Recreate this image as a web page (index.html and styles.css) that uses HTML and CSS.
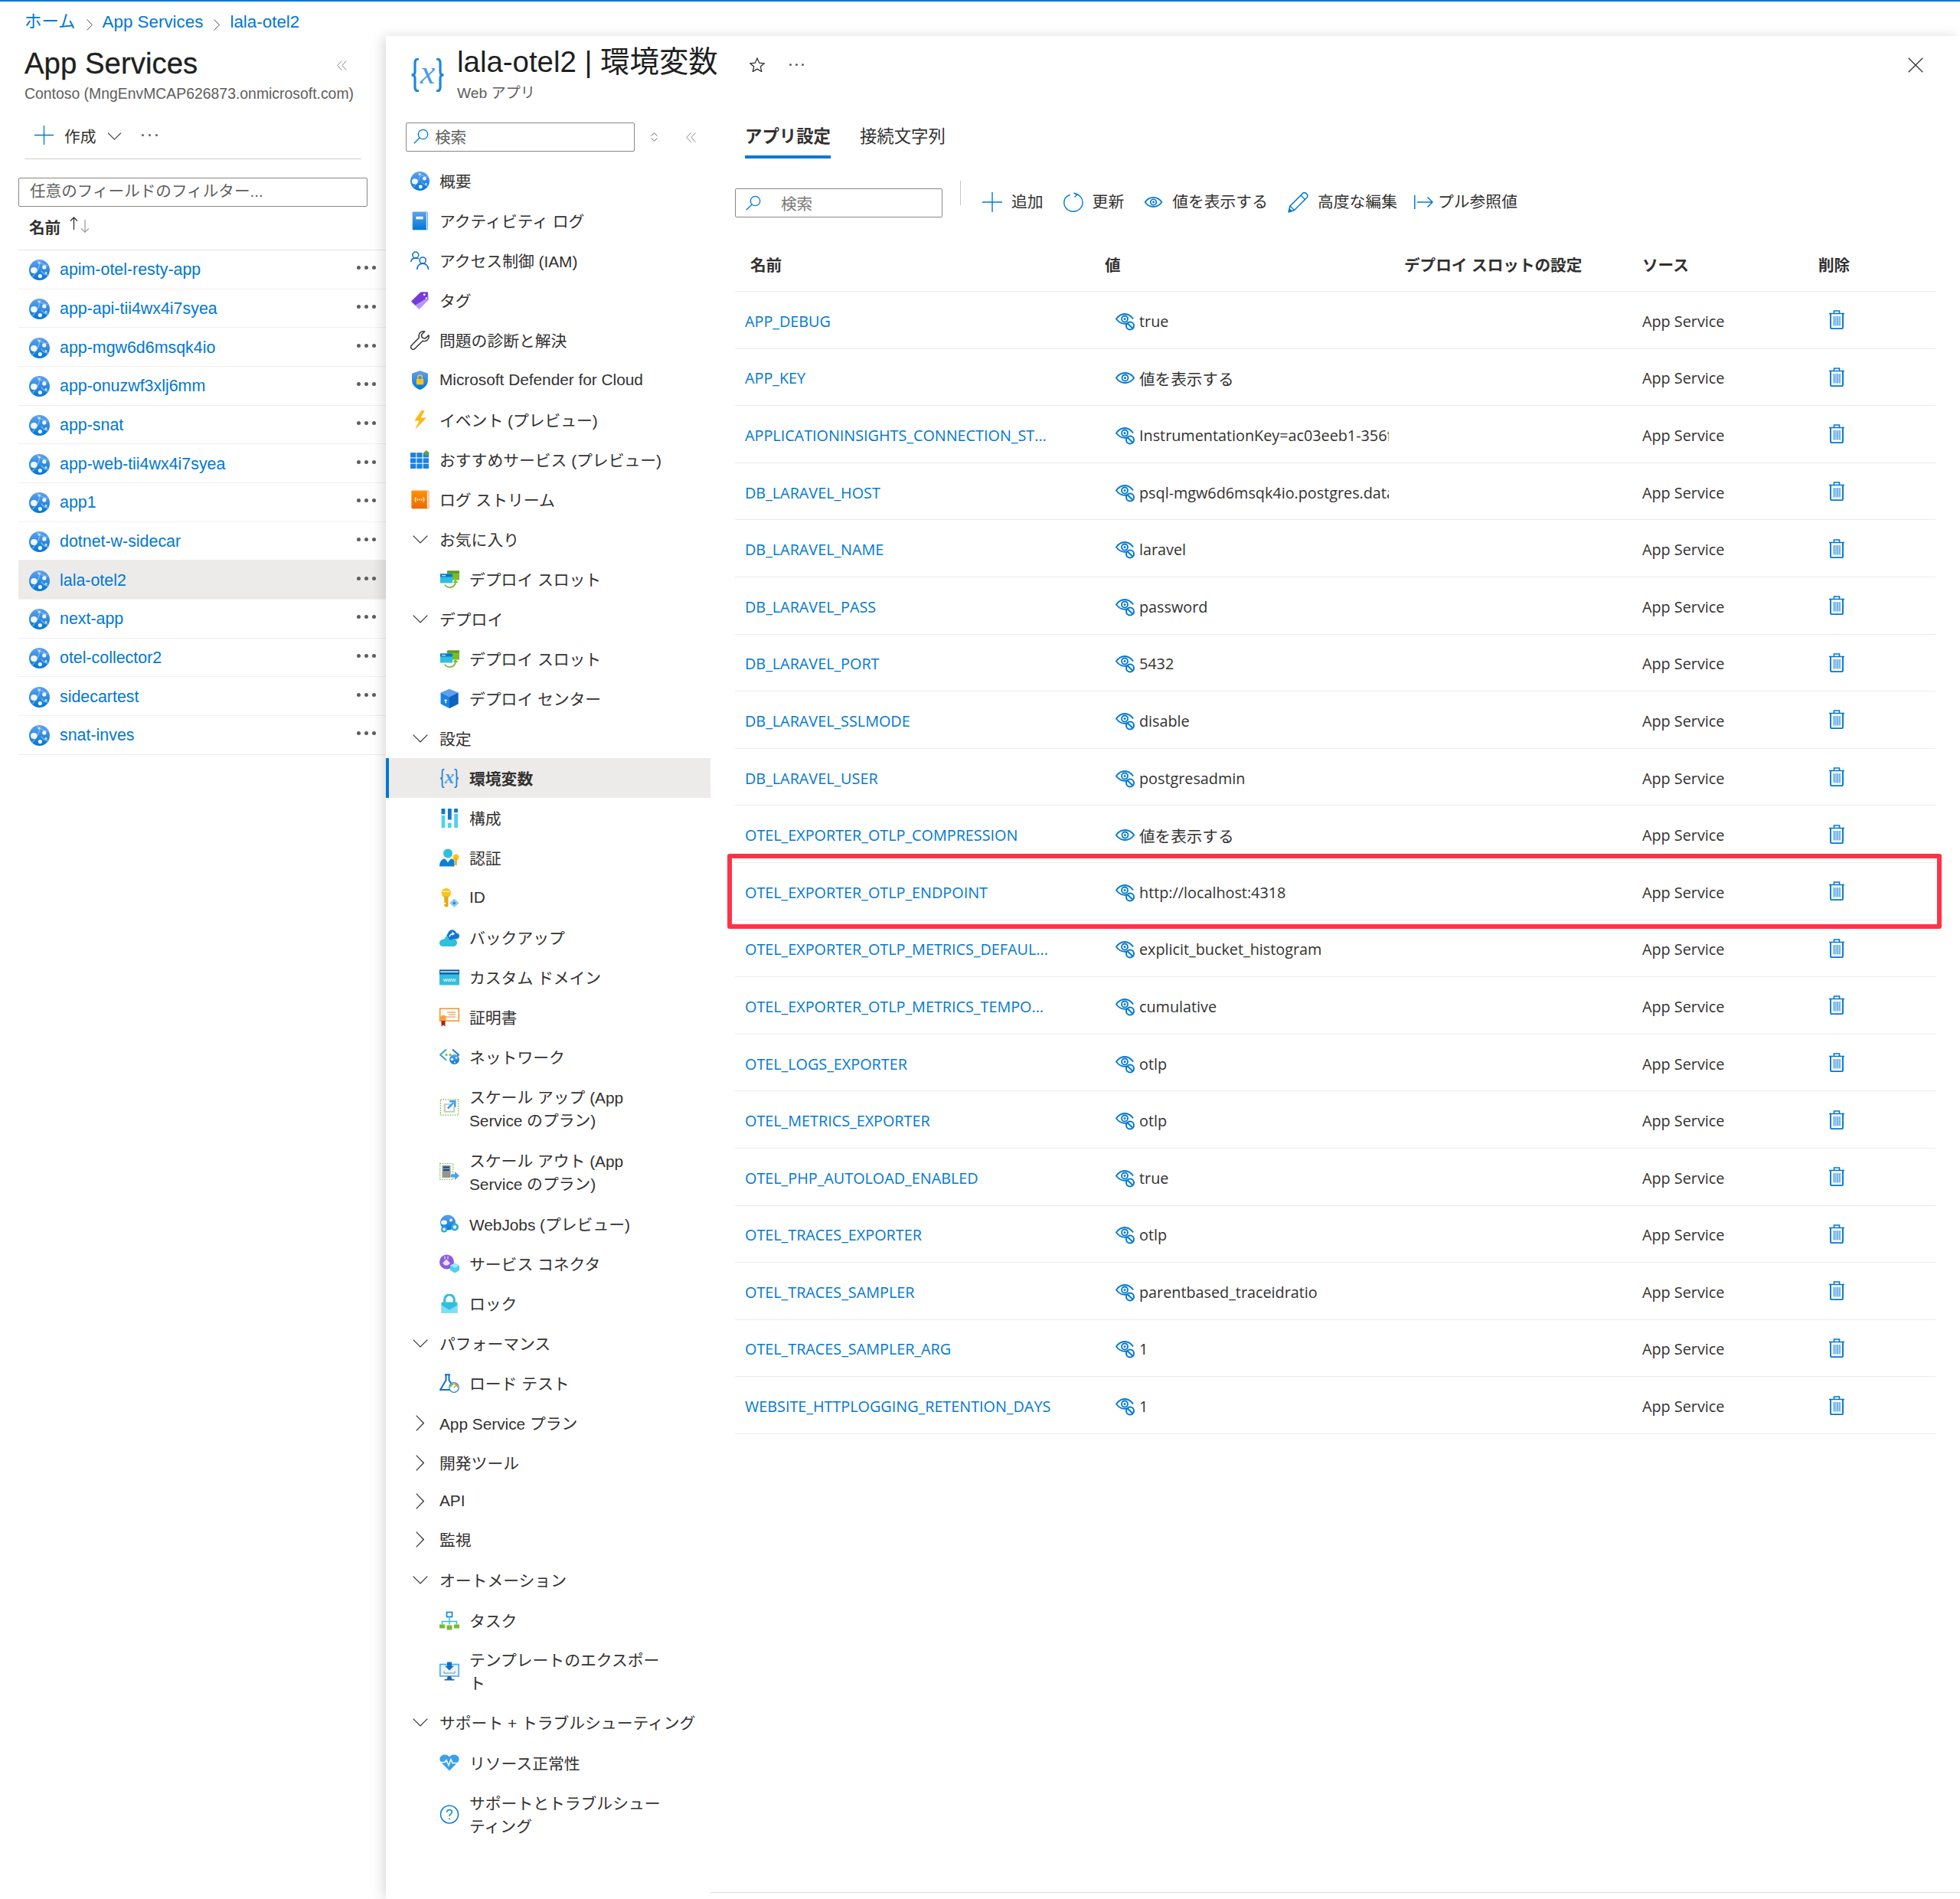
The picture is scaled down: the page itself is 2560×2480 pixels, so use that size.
FILE: index.html
```html
<!DOCTYPE html>
<html lang="ja">
<head>
<meta charset="utf-8">
<title>lala-otel2 | 環境変数</title>
<link rel="stylesheet" href="styles.css">
</head>
<body>
<svg class="defs" xmlns="http://www.w3.org/2000/svg">
  <defs>
    <linearGradient id="gb" x1="0" y1="0" x2="0" y2="1"><stop offset="0" stop-color="#5ea0ef"/><stop offset="1" stop-color="#0078d4"/></linearGradient>
    <linearGradient id="gc" x1="0" y1="0" x2="0" y2="1"><stop offset="0" stop-color="#32bedd"/><stop offset="1" stop-color="#50e6ff"/></linearGradient>
    <linearGradient id="go" x1="0" y1="0" x2="0" y2="1"><stop offset="0" stop-color="#ff9300"/><stop offset="1" stop-color="#ea6a00"/></linearGradient>
    <symbol id="i-globe" viewBox="0 0 24 24"><circle cx="12" cy="12" r="12" fill="url(#gb)"/><path d="M9 1c3 3 7 5 13 6M4 20c4-6 8-9 9-18M14 13c2 3 5 5 9 5" fill="none" stroke="#8cc0f2" stroke-width=".9"/><ellipse cx="5.600" cy="12.400" rx="3.800" ry="3.500" fill="#f2f6fb"/><circle cx="17.600" cy="8.800" r="2.300" fill="#f2f6fb"/><circle cx="12.800" cy="19.200" r="2.300" fill="#f2f6fb"/><circle cx="11.600" cy="3.600" r="1.400" fill="#cfe4f8"/><circle cx="19.600" cy="15.600" r="1.300" fill="#cfe4f8"/></symbol>
    <symbol id="i-book" viewBox="0 0 24 24"><path d="M3 1h17.500a1 1 0 0 1 1 1v20a1 1 0 0 1-1 1H3z" fill="#fff" stroke="#2e8ae0" stroke-width=".8"/><path d="M3 1h16a1 1 0 0 1 1 1v20a1 1 0 0 1-1 1H3z" fill="url(#gb)"/><rect x="7" y="6.500" width="9" height="3.400" fill="#f4f9fe"/></symbol>
    <symbol id="i-people" viewBox="0 0 24 24"><g fill="none" stroke="#0f6fce" stroke-width="1.500"><circle cx="6.500" cy="4.800" r="3.800"/><path d="M.6 13.500c.6-3.500 2.900-5 6-5 1.500 0 2.700.3 3.700 1"/><circle cx="15.500" cy="11.500" r="3.900"/><path d="M8.500 23c0-4.500 3-7.500 7-7.500s7 3 7 7.500"/></g></symbol>
    <symbol id="i-tag" viewBox="0 0 24 24"><path d="M1 13 13 1.500l9 0 1 9.500-12 12z" fill="#b796f9"/><path d="M1 13 13 1.500l9 0-.5 7L6 18z" fill="#773adc"/><circle cx="17.500" cy="4.500" r="1.700" fill="#fff" stroke="#552f99" stroke-width=".6"/><circle cx="20" cy="9" r="1.500" fill="#fff" stroke="#552f99" stroke-width=".6"/></symbol>
    <symbol id="i-wrench" viewBox="0 0 24 24"><path d="M23 5.500l-4.500 4.200-3.700-1-1-3.700L18 1c-3.700-1.200-7.600 1.400-7.400 5.400.1.900.2 1.500.5 2.100L1.500 18.200a2.900 2.900 0 0 0 4.200 4.200l9.700-9.700c4.200 1.500 8.900-2.400 7.600-7.200z" fill="#fff" stroke="#323130" stroke-width="1.400" stroke-linejoin="round"/></symbol>
    <symbol id="i-shield" viewBox="0 0 24 24"><path d="M12 0 22 3.500v9c0 6-5 9.600-10 11.500C7 22.100 2 18.500 2 12.500v-9z" fill="url(#gb)"/><rect x="7.500" y="10.500" width="9" height="7" fill="#fcc419"/><path d="M9.300 10.500V8.500a2.700 2.700 0 0 1 5.400 0v2" fill="none" stroke="#fcc419" stroke-width="1.300"/></symbol>
    <symbol id="i-bolt" viewBox="0 0 24 24"><path d="M14 0 5 13h6l-5 11 14-15h-7l5-9z" fill="#fcb814"/></symbol>
    <symbol id="i-grid" viewBox="0 0 24 24"><g fill="#1883e0"><rect x="0" y="3" width="7" height="6"/><rect x="8" y="3" width="7" height="6"/><rect x="16" y="4" width="7" height="5"/><rect x="0" y="10" width="7" height="6"/><rect x="8" y="10" width="7" height="6"/><rect x="16" y="10" width="7" height="6"/><rect x="0" y="17" width="7" height="6"/><rect x="8" y="17" width="7" height="6"/><rect x="16" y="17" width="7" height="6"/></g><path d="M20 0l4 3.500-4 3.500-4-3.500z" fill="#5fa43a"/></symbol>
    <symbol id="i-stream" viewBox="0 0 24 24"><path d="M2 1h20a1 1 0 0 1 1 1v21H3a1 1 0 0 1-1-1z" fill="#fff" stroke="#ea7a20" stroke-width=".8"/><path d="M1.500 1H20a1 1 0 0 1 1 1v21H1.500z" fill="url(#go)"/><g fill="none" stroke="#fff" stroke-width="1"><path d="M7 9c-1.500 2-1.500 4 0 6M16 9c1.500 2 1.500 4 0 6M9 10.500c-.7 1-.7 2 0 3M14 10.500c.7 1 .7 2 0 3"/></g><circle cx="11.500" cy="12" r="1" fill="#fff"/></symbol>
    <symbol id="i-slot" viewBox="0 0 26 24"><rect x="10" y="1" width="16" height="12" fill="#76bc2d"/><rect x="10" y="1" width="16" height="3" fill="#5e9624"/><rect x="1" y="5" width="16" height="12" fill="#32bedd"/><rect x="1" y="5" width="16" height="4" fill="#0078d4"/><rect x="3" y="6.500" width="5" height="1.300" fill="#cfe7f9"/><path d="M7 19c2 4.500 10 5 13 0 .7-1.200 1-2.400 1-4" fill="none" stroke="#76bc2d" stroke-width="1.800"/><path d="M17.500 16.500 21 12.500l3.500 4z" fill="#76bc2d"/></symbol>
    <symbol id="i-box" viewBox="0 0 24 24"><path d="M12 0 23 4.500v14L12 24 1 18.500v-14z" fill="#1a82e2"/><path d="M12 0 23 4.500 12 10 1 4.500z" fill="#5ea0ef"/><path d="M12 10 23 4.500v14L12 24z" fill="#0f62be"/><path d="M5 14.500l2.500-2 2 2h-1.300v3h-1.500v-3z" fill="#fff"/></symbol>
    <symbol id="i-x" viewBox="0 0 45 44"><path d="M11 1C5 1 6 6 6 10v8c0 3-1.500 4-4.500 4 3 0 4.500 1 4.500 4v8c0 4-1 9 5 9" fill="none" stroke="#1f86e0" stroke-width="3.200"/><path d="M34 1c6 0 5 5 5 9v8c0 3 1.500 4 4.500 4-3 0-4.500 1-4.500 4v8c0 4 1 9-5 9" fill="none" stroke="#1f86e0" stroke-width="3.200"/><text x="22.500" y="33" text-anchor="middle" font-family="Liberation Serif" font-style="italic" font-size="44" fill="#4a9ee8">x</text></symbol>
    <symbol id="i-bars" viewBox="0 0 24 24"><g fill="#50d0f0"><rect x="2" y="0" width="4.500" height="24"/><rect x="10" y="0" width="4.500" height="24"/><rect x="18" y="0" width="4.500" height="24"/></g><g fill="#1176d2"><rect x="2" y="0" width="4.500" height="7"/><rect x="10" y="0" width="4.500" height="14"/><rect x="18" y="0" width="4.500" height="5"/></g><rect x="10" y="14" width="4.500" height="4" fill="#fff"/><rect x="2" y="7" width="4.500" height="1.500" fill="#fff"/><rect x="18" y="5" width="4.500" height="1.500" fill="#fff"/></symbol>
    <symbol id="i-auth" viewBox="0 0 26 24"><circle cx="11" cy="6" r="6" fill="#32bedd"/><path d="M0 23c0-6 3-10 7-10l4 4 4-4c2 0 3.500.8 4.500 2.500V23z" fill="#0f7fd6"/><path d="M8 13h6l-3 5z" fill="#e3f3fb"/><circle cx="21.500" cy="11" r="4" fill="#fcc419"/><rect x="20.300" y="12" width="2.400" height="9.500" fill="#e5a90f"/></symbol>
    <symbol id="i-key" viewBox="0 0 24 24"><circle cx="8" cy="6" r="6" fill="#fcc419"/><rect x="3.500" y="3.500" width="9" height="1.300" fill="#fff2c0"/><path d="M5.500 10h5v12l-2 2-3-2v-2h2v-2h-2z" fill="#e3a90e"/><path d="M18 13l6 5.500-6 5.500-6-5.500z" fill="#92c8ec"/><circle cx="18" cy="18.500" r="1.800" fill="#2a8fd8"/></symbol>
    <symbol id="i-cloud" viewBox="0 0 26 24"><path d="M5 23.500h12c4 0 6-2 6-5 0-2.500-1.500-4.500-5-5C17 9 13 8 10 9.500 7.500 11 7 12.500 6.500 14 2.500 14 0 16 0 19s2 4.500 5 4.500z" fill="#32bedd"/><path d="M13 15c3.500 0 2.500-1 4-1h3.500c3 0 5.500-1.500 5.500-4s-1.500-4-4-4c-1-3-4-5-7-4-2.500 1-4 3-4 5-2 .5-2 3 .5 4z" fill="#1176d2"/><path d="M13 11c.5-2.500 2.500-4 5-4" fill="none" stroke="#fff" stroke-width="1.300"/><path d="M16.500 4l3.500 3-3.500 2.500z" fill="#fff"/></symbol>
    <symbol id="i-www" viewBox="0 0 26 20"><rect width="26" height="20" fill="#32bedd"/><rect width="26" height="6" fill="#0a5fa9"/><rect y="2" x="1" width="24" height="1.500" fill="#e0f0fa"/><text x="13" y="15" text-anchor="middle" font-family="Liberation Sans" font-size="7.500" fill="#fff">www</text></symbol>
    <symbol id="i-cert" viewBox="0 0 26 24"><rect x=".7" y=".7" width="24.600" height="16" fill="#fff" stroke="#f28a1c" stroke-width="1.400"/><g fill="#e89a56"><rect x="10" y="5" width="11" height="1.200"/><rect x="12" y="8" width="9" height="1.200"/><rect x="8" y="11" width="13" height="1.200"/></g><path d="M2.500 15v9l2.500-2 2.500 2v-9z" fill="#a82217"/><circle cx="5" cy="13" r="3.800" fill="#f9a23b"/></symbol>
    <symbol id="i-net" viewBox="0 0 26 24"><path d="M9 2 1 9l8 7" fill="none" stroke="#32a8e0" stroke-width="2.200"/><path d="M17 2l8 7-3 3" fill="none" stroke="#1b79cf" stroke-width="2"/><circle cx="9" cy="9" r="1.600" fill="#76bc2d"/><circle cx="14" cy="9" r="1.600" fill="#76bc2d"/><circle cx="19.500" cy="15" r="6.500" fill="url(#gb)"/><circle cx="16.500" cy="15" r="1.800" fill="#eef6fd"/><circle cx="22" cy="13" r="1.300" fill="#eef6fd"/><circle cx="20" cy="19" r="1.100" fill="#eef6fd"/></symbol>
    <symbol id="i-scaleup" viewBox="0 0 24 24"><rect x=".8" y=".8" width="22.400" height="19.400" fill="none" stroke="#76bc2d" stroke-width="1.200" stroke-dasharray="1.500 1.500"/><path d="M5 6v11h14v-7h-2v5H7V8h6V6z" fill="#c8c8c8"/><path d="M10 12l7-7M12 3.200h7v7" fill="none" stroke="#39a0ed" stroke-width="2.400"/></symbol>
    <symbol id="i-scaleout" viewBox="0 0 26 24"><rect x=".7" y="1" width="17" height="21" fill="none" stroke="#76bc2d" stroke-width="1.200" stroke-dasharray="1.500 1.500"/><rect x="3.500" y="3.500" width="11" height="16" fill="#949494"/><rect x="5" y="5" width="8" height="2" fill="#0f4f8f"/><rect x="5" y="8.500" width="8" height="2" fill="#0f4f8f"/><path d="M15 15h5v-3.500l6 5.500-6 5.500V19h-5z" fill="#45a4ef"/></symbol>
    <symbol id="i-webjobs" viewBox="0 0 26 24"><circle cx="11" cy="10" r="10" fill="url(#gb)"/><ellipse cx="6" cy="10" rx="4" ry="3" fill="#eef6fd"/><circle cx="15" cy="7" r="2" fill="#eef6fd"/><g fill="#2ea8e0"><circle cx="6" cy="19" r="4"/><circle cx="20" cy="16" r="5"/></g><circle cx="6" cy="19" r="1.800" fill="#fff"/><circle cx="20" cy="16" r="2.200" fill="#fff"/></symbol>
    <symbol id="i-conn" viewBox="0 0 26 24"><circle cx="9.500" cy="9.500" r="9.500" fill="#8a5ddd"/><path d="M4 11l5-5 5 5-3 3H7z" fill="#e8e0fa"/><path d="M7 2v4M11 2v4" stroke="#e8e0fa" stroke-width="1.200"/><path d="M20 11l6 3v6.500L20 24l-6-3.500V14z" fill="#50d0f0"/><path d="M20 11l6 3-6 3.300L14 14z" fill="#9ce8fa"/></symbol>
    <symbol id="i-lock" viewBox="0 0 24 24"><path d="M6 11V7a6 6 0 0 1 12 0v4" fill="none" stroke="#32bedd" stroke-width="3"/><rect x="2" y="10" width="20" height="14" rx=".7" fill="#32bedd"/><path d="M2 14l10 6 10-6v10H2z" fill="#7ee0f5"/></symbol>
    <symbol id="i-flask" viewBox="0 0 26 24"><path d="M7 .7h7M8.500 1v7L1 20.500h13" fill="none" stroke="#0f6fce" stroke-width="2"/><path d="M12.500 1v7l2.500 4" fill="none" stroke="#0f6fce" stroke-width="2"/><circle cx="19" cy="17.500" r="6.300" fill="#fff" stroke="#1c87da" stroke-width="1.200"/><path d="M14.500 17a4.500 4.500 0 0 1 4-4" fill="none" stroke="#76bc2d" stroke-width="2"/><path d="M19.500 13a4.500 4.500 0 0 1 4 4" fill="none" stroke="#f28a1c" stroke-width="2"/><path d="M19 18l2-3" stroke="#505050" stroke-width="1"/></symbol>
    <symbol id="i-task" viewBox="0 0 26 24"><rect x="9.500" y="1" width="7" height="6" fill="#fff" stroke="#0f7fd6" stroke-width="1.600"/><path d="M13 7v10M3.500 17v-4h19v4" fill="none" stroke="#32bedd" stroke-width="1.500"/><g fill="#76bc2d"><rect x="0" y="17" width="7" height="5"/><rect x="9.500" y="18" width="7" height="6"/><rect x="19" y="17" width="7" height="5"/></g></symbol>
    <symbol id="i-tpl" viewBox="0 0 26 24"><rect x=".8" y="3" width="24.400" height="15.500" fill="#eaf6fd" stroke="#45a4ef" stroke-width="1.500"/><path d="M10 0h6v5h3l-6 6-6-6h3z" fill="#0f6fce"/><path d="M6 12v2.500h14V12" fill="none" stroke="#8a8886" stroke-width="1"/><path d="M11 18.500h4l1.500 4h3v1.500h-13v-1.500h3z" fill="#1b5fb3"/></symbol>
    <symbol id="i-heart" viewBox="0 0 26 24"><path d="M13 22 2 11C-2 6 2 1 7 1c2.500 0 4.500 1 6 3 1.500-2 3.500-3 6-3 5 0 9 5 5 10z" fill="#39a0ed"/><path d="M1 11h6l2-3 3 7 3-8 2 5h8" fill="none" stroke="#fff" stroke-width="1.500"/></symbol>
    <symbol id="i-help" viewBox="0 0 24 24"><circle cx="12" cy="12" r="11" fill="none" stroke="#0f7fd6" stroke-width="1.500"/><path d="M8.800 9.300c0-1.900 1.300-3 3.200-3s3.200 1.200 3.200 2.800c0 2.700-3.200 2.500-3.200 5.400" fill="none" stroke="#0f7fd6" stroke-width="1.400"/><circle cx="12" cy="17.500" r="1" fill="#0f7fd6"/></symbol>
    <symbol id="i-eye" viewBox="0 0 25 15"><path d="M.8 7.500C4 3 8 1 12.500 1S21 3 24.200 7.500C21 12 17 14 12.500 14S4 12 .8 7.500z" fill="none" stroke="#0078d4" stroke-width="1.800"/><circle cx="12.500" cy="7.500" r="4" fill="none" stroke="#0078d4" stroke-width="1.800"/><circle cx="12.500" cy="7.500" r="1.500" fill="#0078d4"/></symbol>
    <symbol id="i-eyeoff" viewBox="0 0 25 24"><path d="M15 13.300c-1 .3-1.800.5-3 .5C7.800 13.800 4 11.500.9 7.500 4 3.400 7.800 1 12 1s8 2.300 11.100 6.500" fill="none" stroke="#0078d4" stroke-width="1.800"/><circle cx="12" cy="7.500" r="4" fill="none" stroke="#0078d4" stroke-width="1.800"/><circle cx="12" cy="7.500" r="1.500" fill="#0078d4"/><circle cx="19" cy="16.500" r="5" fill="#fff" stroke="#0078d4" stroke-width="2"/><path d="M15.600 13.200l6.800 6.600" stroke="#0078d4" stroke-width="2"/></symbol>
    <symbol id="i-trash" viewBox="0 0 20 25"><path d="M0 4.500h20M6.500 4.500V1h7v3.500" fill="none" stroke="#0078d4" stroke-width="1.600"/><path d="M2 4.500V22.500a1.800 1.800 0 0 0 1.800 1.800h12.400a1.800 1.800 0 0 0 1.800-1.800V4.500" fill="none" stroke="#0078d4" stroke-width="1.900"/><path d="M6.500 8v12.500M9 8v12.500M11.500 8v12.500M14 8v12.500" stroke="#0078d4" stroke-width="1.100"/></symbol>
    <symbol id="i-plus" viewBox="0 0 26 26"><path d="M13 0v26M0 13h26" stroke="#0078d4" stroke-width="1.400"/></symbol>
    <symbol id="i-refresh" viewBox="0 0 26 26"><path d="M8.500 3.500C3.800 5 .8 8.800.8 13.500c0 6.500 5.300 11.700 12 11.700s12.300-5.200 12.300-11.700c0-5.500-4-10.300-9.500-11.500" fill="none" stroke="#0078d4" stroke-width="1.400"/><path d="M13.500 1l4.500 2-3.500 3.500" fill="none" stroke="#0078d4" stroke-width="1.400"/></symbol>
    <symbol id="i-pencil" viewBox="0 0 27 27"><path d="M1 26l2-8L19.500 1.500c1.500-1.200 3.500-1 5 .5s1.700 3.500.5 5L8.500 23.500z" fill="#fff" stroke="#0078d4" stroke-width="1.500" stroke-linejoin="round"/><path d="M3 18l5.500 5.500M17 4l6 6" fill="none" stroke="#0078d4" stroke-width="1.300"/><path d="M1 26l1.300-5 3.500 3.500z" fill="#0078d4"/></symbol>
    <symbol id="i-pull" viewBox="0 0 25 18"><path d="M.8 0v18M4 9h20M17.500 2.500 24 9l-6.500 6.500" fill="none" stroke="#0078d4" stroke-width="1.500"/></symbol>
    <symbol id="i-search" viewBox="0 0 20 20"><circle cx="12.500" cy="7.500" r="6.200" fill="none" stroke="#0078d4" stroke-width="1.300"/><path d="M8 12 .8 19.300" stroke="#0078d4" stroke-width="1.300"/></symbol>
    <symbol id="i-down" viewBox="0 0 20 11"><path d="M.7.7 10 10 19.300.7" fill="none" stroke="#323130" stroke-width="1.200"/></symbol>
    <symbol id="i-right" viewBox="0 0 11 21"><path d="M.7.7 10.300 10.500.7 20.300" fill="none" stroke="#323130" stroke-width="1.200"/></symbol>
    <symbol id="i-dbl" viewBox="0 0 13 13"><path d="M6.500.5.700 6.500l5.800 6M12.500.5 6.700 6.500l5.800 6" fill="none" stroke="#8a8886" stroke-width="1"/></symbol>
    <symbol id="i-updown" viewBox="0 0 9 12"><path d="M.7 4.500 4.500.8l3.800 3.700M.7 7.500l3.800 3.700 3.800-3.700" fill="none" stroke="#605e5c" stroke-width="1"/></symbol>
    <symbol id="i-star" viewBox="0 0 20 19"><path d="M10 1l2.700 6.200 6.500.6-4.900 4.300 1.500 6.400L10 15.100l-5.800 3.400 1.500-6.400L.8 7.800l6.500-.6z" fill="none" stroke="#323130" stroke-width="1.300"/></symbol>
    <symbol id="i-close" viewBox="0 0 20 20"><path d="M.7.700l18.600 18.600M19.300.7.700 19.300" stroke="#323130" stroke-width="1.300"/></symbol>
    <symbol id="i-sort" viewBox="0 0 26 21"><path d="M5.500 17V1M1 5.500 5.500 1 10 5.500" fill="none" stroke="#323130" stroke-width="1.300"/><path d="M20 4v16M15 15.500l5 4.700 5-4.700" fill="none" stroke="#a19f9d" stroke-width="1.300"/></symbol>
  </defs>
</svg>

<nav class="crumbs">
  <a>ホーム</a><svg class="crumb-sep"><use href="#i-right"/></svg>
  <a>App Services</a><svg class="crumb-sep"><use href="#i-right"/></svg>
  <a>lala-otel2</a>
</nav>

<div class="shell">
  <aside class="left">
    <div class="left-head">
      <h1 class="left-title">App Services</h1>
      <svg class="dbl left-collapse"><use href="#i-dbl"/></svg>
    </div>
    <p class="left-sub">Contoso (MngEnvMCAP626873.onmicrosoft.com)</p>
    <div class="left-tools">
      <svg class="tool-plus"><use href="#i-plus"/></svg>
      <span class="tool-text">作成</span>
      <svg class="tool-down"><use href="#i-down"/></svg>
      <span class="dots-sm"><i></i><i></i><i></i></span>
    </div>
    <div class="filter">任意のフィールドのフィルター...</div>
    <div class="list-head"><b>名前</b><svg class="sort"><use href="#i-sort"/></svg></div>
    <ul class="list">
      <li class="res"><svg class="res-icon"><use href="#i-globe"/></svg><a>apim-otel-resty-app</a><span class="dots"><i></i><i></i><i></i></span></li>
      <li class="res"><svg class="res-icon"><use href="#i-globe"/></svg><a>app-api-tii4wx4i7syea</a><span class="dots"><i></i><i></i><i></i></span></li>
      <li class="res"><svg class="res-icon"><use href="#i-globe"/></svg><a>app-mgw6d6msqk4io</a><span class="dots"><i></i><i></i><i></i></span></li>
      <li class="res"><svg class="res-icon"><use href="#i-globe"/></svg><a>app-onuzwf3xlj6mm</a><span class="dots"><i></i><i></i><i></i></span></li>
      <li class="res"><svg class="res-icon"><use href="#i-globe"/></svg><a>app-snat</a><span class="dots"><i></i><i></i><i></i></span></li>
      <li class="res"><svg class="res-icon"><use href="#i-globe"/></svg><a>app-web-tii4wx4i7syea</a><span class="dots"><i></i><i></i><i></i></span></li>
      <li class="res"><svg class="res-icon"><use href="#i-globe"/></svg><a>app1</a><span class="dots"><i></i><i></i><i></i></span></li>
      <li class="res"><svg class="res-icon"><use href="#i-globe"/></svg><a>dotnet-w-sidecar</a><span class="dots"><i></i><i></i><i></i></span></li>
      <li class="res res-on"><svg class="res-icon"><use href="#i-globe"/></svg><a>lala-otel2</a><span class="dots"><i></i><i></i><i></i></span></li>
      <li class="res"><svg class="res-icon"><use href="#i-globe"/></svg><a>next-app</a><span class="dots"><i></i><i></i><i></i></span></li>
      <li class="res"><svg class="res-icon"><use href="#i-globe"/></svg><a>otel-collector2</a><span class="dots"><i></i><i></i><i></i></span></li>
      <li class="res"><svg class="res-icon"><use href="#i-globe"/></svg><a>sidecartest</a><span class="dots"><i></i><i></i><i></i></span></li>
      <li class="res"><svg class="res-icon"><use href="#i-globe"/></svg><a>snat-inves</a><span class="dots"><i></i><i></i><i></i></span></li>
    </ul>
  </aside>

  <main class="blade">
    <header class="blade-head">
      <svg class="blade-icon"><use href="#i-x"/></svg>
      <div class="blade-titles">
        <h2 class="blade-title">lala-otel2 | 環境変数</h2>
        <p class="blade-sub">Web アプリ</p>
      </div>
      <svg class="star"><use href="#i-star"/></svg>
      <span class="dots-sm head-dots"><i></i><i></i><i></i></span>
      <svg class="close"><use href="#i-close"/></svg>
    </header>
    <div class="blade-body">
      <div class="nav">
        <div class="nav-search">
          <div class="search nav-box"><svg class="search-icon"><use href="#i-search"/></svg><span>検索</span></div>
          <svg class="updown"><use href="#i-updown"/></svg>
          <svg class="dbl nav-collapse"><use href="#i-dbl"/></svg>
        </div>
        <ul class="menu">
          <li class="m"><svg class="m-i"><use href="#i-globe"/></svg>概要</li>
          <li class="m"><svg class="m-i"><use href="#i-book"/></svg>アクティビティ ログ</li>
          <li class="m"><svg class="m-i"><use href="#i-people"/></svg>アクセス制御 (IAM)</li>
          <li class="m"><svg class="m-i"><use href="#i-tag"/></svg>タグ</li>
          <li class="m"><svg class="m-i"><use href="#i-wrench"/></svg>問題の診断と解決</li>
          <li class="m"><svg class="m-i"><use href="#i-shield"/></svg>Microsoft Defender for Cloud</li>
          <li class="m"><svg class="m-i"><use href="#i-bolt"/></svg>イベント (プレビュー)</li>
          <li class="m"><svg class="m-i"><use href="#i-grid"/></svg>おすすめサービス (プレビュー)</li>
          <li class="m"><svg class="m-i"><use href="#i-stream"/></svg>ログ ストリーム</li>
          <li class="m"><span class="m-c"><svg class="chev-d"><use href="#i-down"/></svg></span>お気に入り</li>
          <li class="m sub"><svg class="m-i"><use href="#i-slot"/></svg>デプロイ スロット</li>
          <li class="m"><span class="m-c"><svg class="chev-d"><use href="#i-down"/></svg></span>デプロイ</li>
          <li class="m sub"><svg class="m-i"><use href="#i-slot"/></svg>デプロイ スロット</li>
          <li class="m sub"><svg class="m-i"><use href="#i-box"/></svg>デプロイ センター</li>
          <li class="m"><span class="m-c"><svg class="chev-d"><use href="#i-down"/></svg></span>設定</li>
          <li class="m sub m-on"><svg class="m-i"><use href="#i-x"/></svg>環境変数</li>
          <li class="m sub"><svg class="m-i"><use href="#i-bars"/></svg>構成</li>
          <li class="m sub"><svg class="m-i"><use href="#i-auth"/></svg>認証</li>
          <li class="m sub"><svg class="m-i"><use href="#i-key"/></svg>ID</li>
          <li class="m sub"><svg class="m-i"><use href="#i-cloud"/></svg>バックアップ</li>
          <li class="m sub"><svg class="m-i"><use href="#i-www"/></svg>カスタム ドメイン</li>
          <li class="m sub"><svg class="m-i"><use href="#i-cert"/></svg>証明書</li>
          <li class="m sub"><svg class="m-i"><use href="#i-net"/></svg>ネットワーク</li>
          <li class="m sub two"><svg class="m-i"><use href="#i-scaleup"/></svg><span class="m-t">スケール アップ (App Service のプラン)</span></li>
          <li class="m sub two"><svg class="m-i"><use href="#i-scaleout"/></svg><span class="m-t">スケール アウト (App Service のプラン)</span></li>
          <li class="m sub"><svg class="m-i"><use href="#i-webjobs"/></svg>WebJobs (プレビュー)</li>
          <li class="m sub"><svg class="m-i"><use href="#i-conn"/></svg>サービス コネクタ</li>
          <li class="m sub"><svg class="m-i"><use href="#i-lock"/></svg>ロック</li>
          <li class="m"><span class="m-c"><svg class="chev-d"><use href="#i-down"/></svg></span>パフォーマンス</li>
          <li class="m sub"><svg class="m-i"><use href="#i-flask"/></svg>ロード テスト</li>
          <li class="m"><span class="m-c"><svg class="chev-r"><use href="#i-right"/></svg></span>App Service プラン</li>
          <li class="m"><span class="m-c"><svg class="chev-r"><use href="#i-right"/></svg></span>開発ツール</li>
          <li class="m m-short"><span class="m-c"><svg class="chev-r"><use href="#i-right"/></svg></span>API</li>
          <li class="m"><span class="m-c"><svg class="chev-r"><use href="#i-right"/></svg></span>監視</li>
          <li class="m m-tall"><span class="m-c"><svg class="chev-d"><use href="#i-down"/></svg></span>オートメーション</li>
          <li class="m sub"><svg class="m-i"><use href="#i-task"/></svg>タスク</li>
          <li class="m sub two two-tight"><svg class="m-i"><use href="#i-tpl"/></svg><span class="m-t">テンプレートのエクスポート</span></li>
          <li class="m m-tall"><span class="m-c"><svg class="chev-d"><use href="#i-down"/></svg></span>サポート + トラブルシューティング</li>
          <li class="m sub"><svg class="m-i"><use href="#i-heart"/></svg>リソース正常性</li>
          <li class="m sub two"><svg class="m-i"><use href="#i-help"/></svg><span class="m-t">サポートとトラブルシューティング</span></li>
        </ul>
      </div>

      <section class="content">
        <div class="tabs"><span class="tab tab-on">アプリ設定</span><span class="tab">接続文字列</span></div>
        <div class="bar">
          <div class="search bar-box"><svg class="search-icon"><use href="#i-search"/></svg><span>検索</span></div>
          <span class="bar-div"></span>
          <span class="btn"><svg class="b-26"><use href="#i-plus"/></svg>追加</span>
          <span class="btn"><svg class="b-26"><use href="#i-refresh"/></svg>更新</span>
          <span class="btn"><svg class="b-eye"><use href="#i-eye"/></svg>値を表示する</span>
          <span class="btn"><svg class="b-pen"><use href="#i-pencil"/></svg>高度な編集</span>
          <span class="btn btn-tight"><svg class="b-pull"><use href="#i-pull"/></svg>プル参照値</span>
        </div>
        <div class="thead"><span>名前</span><span>値</span><span>デプロイ スロットの設定</span><span>ソース</span><span>削除</span></div>
        <div class="tr"><a class="k">APP_DEBUG</a><span class="v"><svg class="eo"><use href="#i-eyeoff"/></svg>true</span><span></span><span>App Service</span><svg class="del"><use href="#i-trash"/></svg></div>
        <div class="tr"><a class="k">APP_KEY</a><span class="v v-ja"><svg class="en"><use href="#i-eye"/></svg>値を表示する</span><span></span><span>App Service</span><svg class="del"><use href="#i-trash"/></svg></div>
        <div class="tr"><a class="k">APPLICATIONINSIGHTS_CONNECTION_ST...</a><span class="v"><svg class="eo"><use href="#i-eyeoff"/></svg>InstrumentationKey=ac03eeb1-356f-4a2b</span><span></span><span>App Service</span><svg class="del"><use href="#i-trash"/></svg></div>
        <div class="tr"><a class="k">DB_LARAVEL_HOST</a><span class="v"><svg class="eo"><use href="#i-eyeoff"/></svg>psql-mgw6d6msqk4io.postgres.database.azure.com</span><span></span><span>App Service</span><svg class="del"><use href="#i-trash"/></svg></div>
        <div class="tr"><a class="k">DB_LARAVEL_NAME</a><span class="v"><svg class="eo"><use href="#i-eyeoff"/></svg>laravel</span><span></span><span>App Service</span><svg class="del"><use href="#i-trash"/></svg></div>
        <div class="tr"><a class="k">DB_LARAVEL_PASS</a><span class="v"><svg class="eo"><use href="#i-eyeoff"/></svg>password</span><span></span><span>App Service</span><svg class="del"><use href="#i-trash"/></svg></div>
        <div class="tr"><a class="k">DB_LARAVEL_PORT</a><span class="v"><svg class="eo"><use href="#i-eyeoff"/></svg>5432</span><span></span><span>App Service</span><svg class="del"><use href="#i-trash"/></svg></div>
        <div class="tr"><a class="k">DB_LARAVEL_SSLMODE</a><span class="v"><svg class="eo"><use href="#i-eyeoff"/></svg>disable</span><span></span><span>App Service</span><svg class="del"><use href="#i-trash"/></svg></div>
        <div class="tr"><a class="k">DB_LARAVEL_USER</a><span class="v"><svg class="eo"><use href="#i-eyeoff"/></svg>postgresadmin</span><span></span><span>App Service</span><svg class="del"><use href="#i-trash"/></svg></div>
        <div class="tr"><a class="k">OTEL_EXPORTER_OTLP_COMPRESSION</a><span class="v v-ja"><svg class="en"><use href="#i-eye"/></svg>値を表示する</span><span></span><span>App Service</span><svg class="del"><use href="#i-trash"/></svg></div>
        <div class="tr tr-hl"><a class="k">OTEL_EXPORTER_OTLP_ENDPOINT</a><span class="v"><svg class="eo"><use href="#i-eyeoff"/></svg>http://localhost:4318</span><span></span><span>App Service</span><svg class="del"><use href="#i-trash"/></svg></div>
        <div class="tr"><a class="k">OTEL_EXPORTER_OTLP_METRICS_DEFAUL...</a><span class="v"><svg class="eo"><use href="#i-eyeoff"/></svg>explicit_bucket_histogram</span><span></span><span>App Service</span><svg class="del"><use href="#i-trash"/></svg></div>
        <div class="tr"><a class="k">OTEL_EXPORTER_OTLP_METRICS_TEMPO...</a><span class="v"><svg class="eo"><use href="#i-eyeoff"/></svg>cumulative</span><span></span><span>App Service</span><svg class="del"><use href="#i-trash"/></svg></div>
        <div class="tr"><a class="k">OTEL_LOGS_EXPORTER</a><span class="v"><svg class="eo"><use href="#i-eyeoff"/></svg>otlp</span><span></span><span>App Service</span><svg class="del"><use href="#i-trash"/></svg></div>
        <div class="tr"><a class="k">OTEL_METRICS_EXPORTER</a><span class="v"><svg class="eo"><use href="#i-eyeoff"/></svg>otlp</span><span></span><span>App Service</span><svg class="del"><use href="#i-trash"/></svg></div>
        <div class="tr"><a class="k">OTEL_PHP_AUTOLOAD_ENABLED</a><span class="v"><svg class="eo"><use href="#i-eyeoff"/></svg>true</span><span></span><span>App Service</span><svg class="del"><use href="#i-trash"/></svg></div>
        <div class="tr"><a class="k">OTEL_TRACES_EXPORTER</a><span class="v"><svg class="eo"><use href="#i-eyeoff"/></svg>otlp</span><span></span><span>App Service</span><svg class="del"><use href="#i-trash"/></svg></div>
        <div class="tr"><a class="k">OTEL_TRACES_SAMPLER</a><span class="v"><svg class="eo"><use href="#i-eyeoff"/></svg>parentbased_traceidratio</span><span></span><span>App Service</span><svg class="del"><use href="#i-trash"/></svg></div>
        <div class="tr"><a class="k">OTEL_TRACES_SAMPLER_ARG</a><span class="v"><svg class="eo"><use href="#i-eyeoff"/></svg>1</span><span></span><span>App Service</span><svg class="del"><use href="#i-trash"/></svg></div>
        <div class="tr"><a class="k">WEBSITE_HTTPLOGGING_RETENTION_DAYS</a><span class="v"><svg class="eo"><use href="#i-eyeoff"/></svg>1</span><span></span><span>App Service</span><svg class="del"><use href="#i-trash"/></svg></div>
        <div class="foot-line"></div>
      </section>
    </div>
  </main>
</div>
</body>
</html>
```
FILE: styles.css
```css
* { box-sizing: border-box; }
html, body { margin: 0; padding: 0; }
body {
  width: 2560px;
  height: 2480px;
  overflow: hidden;
  display: flex;
  flex-direction: column;
  border-top: 2px solid #0078d4;
  background: #fff;
  color: #323130;
  font-family: "Liberation Sans", "Noto Sans CJK JP", sans-serif;
  font-size: 20.8px;
}
ul { list-style: none; margin: 0; padding: 0; }
h1, h2, p { margin: 0; font-weight: 400; }
svg { display: block; flex: none; }
.defs { width: 0; height: 0; }
a { color: #0078d4; }

/* breadcrumb */
.crumbs { height: 45px; display: flex; align-items: center; padding: 9px 0 0 32px; font-size: 22.4px; }
.crumbs a { line-height: 30px; }
.crumb-sep { width: 8px; height: 15px; margin: 6px 13px 0 14px; }

.shell { flex: 1; display: flex; min-height: 0; }

/* left list */
.left { width: 504px; flex: none; display: flex; flex-direction: column; }
.left-head { height: 46px; margin-top: 13px; padding: 0 0 0 32px; display: flex; align-items: center; justify-content: space-between; }
.left-title { font-size: 38.4px; line-height: 46px; color: #201f1e; -webkit-text-stroke: .3px #201f1e; }
.dbl { width: 13px; height: 13px; }
.left-collapse { margin: 4px 51px 0 0; }
.left-sub { margin: 4px 0 0 32px; font-size: 19.4px; line-height: 24px; color: #605e5c; }
.left-tools { margin: 15px 32px 0 32px; height: 59px; border-bottom: 1px solid #d2d0ce; display: flex; align-items: center; padding: 0 0 3px 13px; }
.tool-plus { width: 25px; height: 25px; }
.tool-text { margin-left: 14px; }
.tool-down { width: 19px; height: 10px; margin: 2px 0 0 14px; }
.dots-sm { display: flex; gap: 6px; margin-left: 26px; }
.dots-sm i { width: 3px; height: 3px; border-radius: 50%; background: #605e5c; }
.filter { margin: 24px 0 0 24px; width: 456px; height: 38px; border: 1px solid #8a8886; border-radius: 2px; padding-left: 14px; line-height: 34px; color: #605e5c; font-size: 20.6px; }
.list-head { margin-left: 24px; height: 57px; border-bottom: 1px solid #e6e4e2; display: flex; align-items: center; padding: 0 0 5px 14px; }
.list-head b { font-size: 20.6px; }
.sort { width: 26px; height: 21px; margin: -4px 0 0 12px; }
.res { margin-left: 24px; height: 50.67px; border-bottom: 1px solid #f0efed; display: flex; align-items: center; padding: 2px 13px 0 14px; font-size: 21.4px; }
.res-on { background: #edebe9; }
.res-icon { width: 27px; height: 27px; margin-right: 13px; }
.dots { margin-left: auto; display: flex; gap: 5px; margin-top: -6px; }
.dots i { width: 5px; height: 5px; border-radius: 50%; background: #605e5c; }

/* main blade */
.blade { flex: 1; min-width: 0; display: flex; flex-direction: column; background: #fff; box-shadow: -5px 0 14px rgba(0,0,0,.13); z-index: 1; }
.blade-head { height: 113px; flex: none; display: flex; padding-left: 32px; }
.blade-icon { width: 45px; height: 44px; margin: 29px 16px 0 0; }
.blade-titles { padding-top: 11px; }
.blade-title { font-size: 38.4px; line-height: 46px; color: #201f1e; white-space: nowrap; }
.blade-sub { margin-top: 6px; font-size: 19.2px; line-height: 24px; color: #605e5c; }
.star { width: 20px; height: 19px; margin: 28px 0 0 41px; }
.head-dots { margin: 36px 0 0 32px; height: 3px; gap: 5px; }
.close { width: 20px; height: 20px; margin: 28px 48px 0 auto; }
.blade-body { flex: 1; display: flex; min-height: 0; }

/* resource menu */
.nav { width: 424px; flex: none; }
.nav-search { display: flex; align-items: center; padding-left: 26px; }
.search { border: 1px solid #8a8886; border-radius: 2px; display: flex; align-items: center; color: #605e5c; font-size: 20.6px; }
.nav-box { width: 299px; height: 38px; padding: 0 0 3px 9px; }
.nav-box span { margin-left: 8px; }
.search-icon { width: 20px; height: 20px; }
.updown { width: 9px; height: 12px; margin-left: 21px; }
.nav-collapse { margin-left: 37px; }
.menu { margin-top: 12px; }
.m { height: 52px; display: flex; align-items: center; padding-left: 32px; white-space: nowrap; }
.m-short { height: 48px; }
.m-tall { height: 54px; }
.m-i { width: 25px; height: 25px; margin-right: 13px; }
.m-c { width: 25px; height: 25px; margin-right: 13px; display: flex; align-items: center; justify-content: center; }
.chev-d { width: 20px; height: 11px; }
.chev-r { width: 11px; height: 21px; }
.sub { padding-left: 70px; }
.sub .m-i { width: 26px; }
.two { height: 83px; }
.two-tight { height: 80px; }
.m-t { width: 262px; white-space: normal; line-height: 30px; padding-top: 3px; }
.m-on { background: #edebe9; box-shadow: inset 4px 0 0 #0078d4; font-weight: 700; }

/* content */
.content { flex: 1; min-width: 0; padding: 0 32px; position: relative; }
.tabs { height: 47px; display: flex; gap: 38px; padding-left: 13px; font-size: 22.4px; }
.tab { height: 47px; line-height: 37px; }
.tab-on { font-weight: 700; border-bottom: 4px solid #0078d4; }
.bar { margin-top: 29px; height: 48px; display: flex; align-items: flex-start; font-size: 20.8px; }
.bar-box { width: 271px; height: 38px; margin-top: 10px; padding-left: 13px; }
.bar-box span { margin-left: 26px; color: #797775; }
.bar-div { width: 1px; height: 32px; margin: 0 28px 0 23px; background: #c8c6c4; }
.btn { display: flex; align-items: center; height: 26px; margin: 15px 26px 0 0; line-height: 26px; white-space: nowrap; color: #323130; }
.btn svg { margin-right: 12px; }
.btn-tight { margin: 15px 0 0 -4px; }
.btn-tight svg { margin-right: 6px; }
.b-26 { width: 26px; height: 26px; }
.b-eye { width: 25px; height: 14px; }
.b-pen { width: 27px; height: 27px; }
.b-pull { width: 25px; height: 18px; }
.thead, .tr { display: grid; align-items: center; }
.thead { height: 97px; grid-template-columns: 483px 391px 311px 230px 1fr; padding: 0 0 20px 20px; border-bottom: 1px solid #edebe9; font-weight: 700; font-size: 20.6px; align-items: end; }
.thead span:nth-child(n+2) { margin-left: -20px; }
.tr { height: 74.6px; padding-top: 3px; grid-template-columns: 497px 357px 331px 230px 1fr; border-bottom: 1px solid #edebe9; font-family: "Open Sans", "Noto Sans CJK JP", sans-serif; font-size: 19.8px; position: relative; color: #323130; }
.k { padding-left: 13px; white-space: nowrap; }
.v { display: flex; align-items: center; white-space: nowrap; overflow: hidden; }
.v-ja { font-size: 20.6px; }
.eo { width: 25px; height: 24px; margin: 3px 6px 0 0; }
.en { width: 25px; height: 15px; margin-right: 6px; }
.del { width: 20px; height: 25px; margin: -3px 0 0 14px; }
.tr-hl::after { content: ""; position: absolute; left: -10px; right: -8px; top: -12px; bottom: -12px; border: 6px solid #ff3347; border-radius: 3px; pointer-events: none; }
.foot-line { position: absolute; left: 0; right: 0; top: 2311px; height: 1px; background: #e1dfdd; }
```
